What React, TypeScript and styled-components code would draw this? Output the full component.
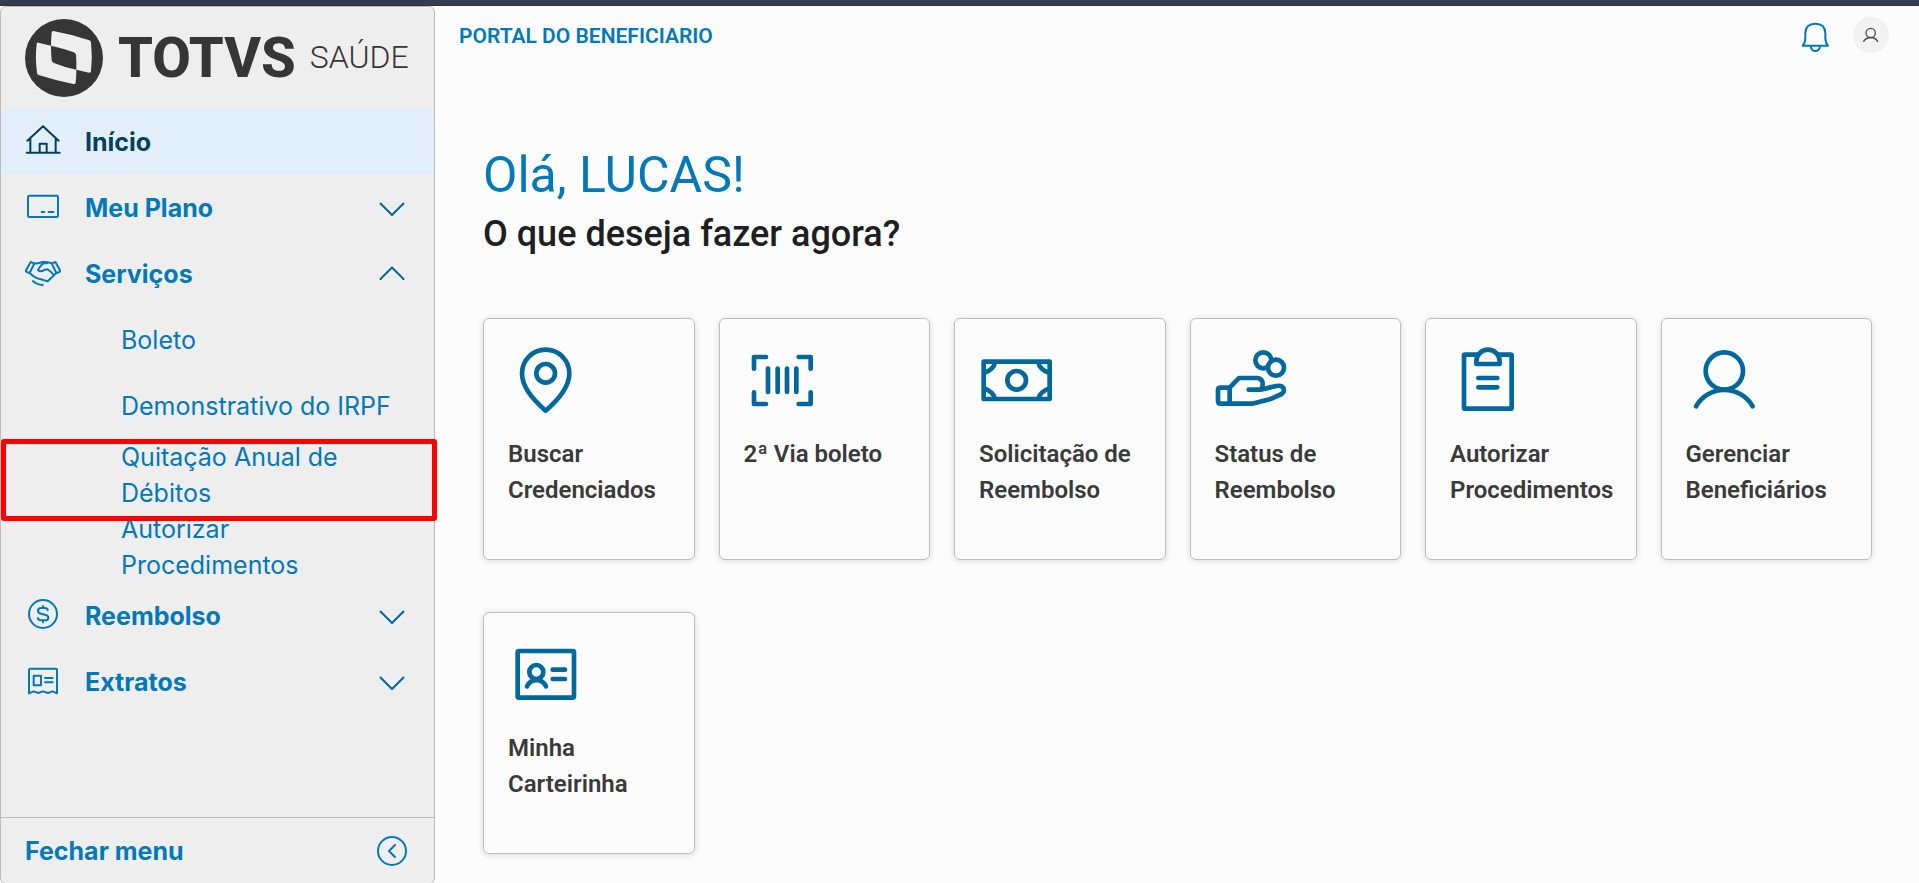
import React from "react";
import styled, { createGlobalStyle, css } from "styled-components";

const color = {
  brand: "#0079b8",
  brandDark: "#00689d",
  brandDeep: "#00405f",
  selected: "#e2eefa",
  panel: "#eeeeee",
  page: "#fcfcfc",
  line: "#bbbdbf",
  title: "#1d2022",
  text: "#3a3a3a",
  logo: "#363636",
  mark: "#ff0000",
};

const menuFont = `Inter, "Open Sans", sans-serif`;

const GlobalStyle = createGlobalStyle`
  *, *::before, *::after { box-sizing: border-box; }
  body {
    margin: 0;
    background: ${color.page};
    font-family: Roboto, "Liberation Sans", sans-serif;
    color: ${color.text};
  }
  h1, h2, ul { margin: 0; padding: 0; }
  ul { list-style: none; }
  a { color: inherit; text-decoration: none; }
  button { border: 0; padding: 0; background: none; color: inherit; font: inherit; cursor: pointer; }
`;

const Page = styled.div`
  display: flex;
  flex-direction: column;
  min-height: 100vh;
`;

const TopStrip = styled.div`
  height: 6px;
  background: #333c50;
  border-bottom: 1px solid #2b3142;
`;

const Body = styled.div`
  flex: 1;
  display: flex;
`;

/* Side menu */

const Sidebar = styled.aside`
  flex: none;
  width: 435px;
  display: flex;
  flex-direction: column;
  background: ${color.panel};
  border: 1px solid ${color.line};
  border-radius: 6px;
  color: ${color.brand};
  font-family: ${menuFont};
  font-size: 25px;
  line-height: 36px;
`;

const Brand = styled.a`
  display: flex;
  align-items: center;
  height: 102px;
  padding-left: 24px;
  color: ${color.logo};
  font-family: Roboto, sans-serif;
`;

const BrandName = styled.span`
  margin-left: 15px;
  font-size: 56px;
  font-weight: 800;
  line-height: 60px;
`;

const BrandUnit = styled.span`
  margin-left: 14px;
  padding-bottom: 2px;
  font-size: 32px;
  font-weight: 300;
  line-height: 60px;
`;

const Nav = styled.nav`
  flex: 1;
`;

const rowLayout = css`
  display: flex;
  align-items: center;
  width: 100%;
  height: 66px;
  padding: 0 27px 0 24px;
  text-align: left;
  font-weight: 700;
`;

const MenuLink = styled.a<{ $active?: boolean }>`
  ${rowLayout}
  gap: 24px;
  border-radius: 6px;
  ${(p) => p.$active && css`
    && { color: ${color.brandDeep}; }
    background: ${color.selected};
  `}
`;

const MenuButton = styled.button`
  && {
    ${rowLayout}
    gap: 24px;
  }
`;

const MenuLabel = styled.span`
  flex: 1;
`;

const SubItem = styled.li<{ $marked?: boolean }>`
  position: relative;
  ${(p) => p.$marked && css`
    &::after {
      content: "";
      position: absolute;
      z-index: 1;
      inset: 0 -3px -10px 0;
      border: 5px solid ${color.mark};
      border-radius: 3px;
      pointer-events: none;
    }
  `}
`;

const SubLink = styled.a`
  display: flex;
  align-items: center;
  min-height: 66px;
  padding: 0 27px 0 120px;
  font-weight: 400;
`;

const CloseButton = styled.button`
  && {
    ${rowLayout}
    justify-content: space-between;
    border-top: 1px solid ${color.line};
  }
`;

/* Main area */

const Main = styled.div`
  flex: 1;
  min-width: 0;
`;

const Header = styled.header`
  display: flex;
  align-items: center;
  height: 58px;
  padding: 0 30px 0 24px;
`;

const PortalName = styled.div`
  flex: 1;
  padding-top: 2px;
  color: ${color.brand};
  font-size: 21px;
  font-weight: 600;
  line-height: 28px;
`;

const HeaderActions = styled.div`
  display: flex;
  align-items: center;
  gap: 20px;
`;

const IconButton = styled.button`
  && {
    display: flex;
    color: ${color.brand};
  }
`;

const Avatar = styled.button`
  && {
    display: flex;
    border-radius: 50%;
    background: radial-gradient(#f6f6f6, #eeeeee);
    color: #4a4a4a;
  }
`;

const Content = styled.main`
  padding: 78px 47px 30px 48px;
`;

const Greeting = styled.h1`
  color: ${color.brand};
  font-size: 50px;
  font-weight: 400;
  line-height: 66px;
`;

const Question = styled.h2`
  margin-bottom: 58px;
  color: ${color.title};
  font-size: 36px;
  font-weight: 500;
  line-height: 52px;
`;

const Cards = styled.ul`
  display: grid;
  grid-template-columns: repeat(6, minmax(0, 1fr));
  column-gap: 24px;
  row-gap: 52px;
`;

const Card = styled.a`
  display: flex;
  flex-direction: column;
  align-items: flex-start;
  gap: 17px;
  min-height: 242px;
  padding: 24px 0 24px 24px;
  border: 1px solid ${color.line};
  border-radius: 6px;
  box-shadow: 0 1px 6px rgba(0, 0, 0, 0.14);
  font-size: 24px;
  font-weight: 600;
  line-height: 36px;
`;

const CardTitle = styled.span`
  max-width: 168px;
`;

/* Drawings */

const Glyph = styled.svg<{ $tone?: string }>`
  flex: none;
  display: block;
  fill: none;
  stroke: ${(p) => p.$tone || "currentColor"};
  stroke-linecap: round;
  stroke-linejoin: round;
`;

const MenuGlyph = ({ children }: { children: React.ReactNode }) => (
  <Glyph width="36" height="36" viewBox="0 0 108 108" strokeWidth="6" aria-hidden="true">
    {children}
  </Glyph>
);

const CardGlyph = ({ children }: { children: React.ReactNode }) => (
  <Glyph width="76" height="76" viewBox="-2 -2 228 228" strokeWidth="14" $tone={color.brandDark} aria-hidden="true">
    {children}
  </Glyph>
);

const Chevron = ({ open }: { open?: boolean }) => (
  <Glyph width="30" height="30" viewBox="0 0 30 30" strokeWidth="2" $tone={color.brandDark} aria-hidden="true">
    <path d={open ? "M3.5 20 15 8.5 26.5 20" : "M3.5 10.5 15 22 26.5 10.5"} />
  </Glyph>
);

const LogoMark = () => (
  <svg width="78" height="78" viewBox="75 57 234 234" aria-hidden="true">
    <circle cx="192" cy="174" r="117" fill={color.logo} />
    <g fill={color.panel}>
      <path d="M160 93Q215 103 268 121Q272 122 273 127Q278 170 273 214Q272 219 267 218L229 209Q230 186 228 165Q227 159 221 157Q190 145 153 137Q153 118 155 98Q156 92 160 93Z" />
      <path d="M115 128L153 137Q153 160 155 181Q156 187 162 189Q193 202 229 209Q229 230 227 248Q226 253 220 252Q165 241 116 225Q111 223 111 218Q105 174 110 132Q111 127 115 128Z" />
    </g>
  </svg>
);

const menuIcons = {
  home: (
    <MenuGlyph>
      <path d="M7 50 54 7l47 43M16 43v43M92 43v43M5 86h99M44 86V59h21v27" />
    </MenuGlyph>
  ),
  card: (
    <MenuGlyph>
      <rect x="9" y="17" width="90" height="64" rx="4" />
      <path d="M50 66h8M71 66h14" />
    </MenuGlyph>
  ),
  handshake: (
    <MenuGlyph>
      <path d="M17 18 3 43Q2 46 5 48L14 51 28 22ZM91 18l14 25Q106 46 103 48L94 51 80 22Z" />
      <path d="M28 23Q42 21 54 18Q66 17 80 22M66 22H56Q49 25 39 42Q47 50 60 41L68 40Q79 47 87 58M14 51Q30 67 45 69L68 76 94 51M24 75Q36 86 53 87" />
    </MenuGlyph>
  ),
  money: (
    <MenuGlyph>
      <circle cx="54" cy="48" r="42" />
      <path d="M68 37Q68 30 59 30H49Q39 30 39 38Q39 45 48 47L60 50Q70 52 70 59Q70 67 60 67H49Q39 67 39 60M54 24v6M54 67v6" />
    </MenuGlyph>
  ),
  receipt: (
    <MenuGlyph>
      <path d="M12 88V18Q12 14 16 14H92Q96 14 96 18V88L83 82 69 87 54 82 40 87 26 82Z" />
      <path d="M26 35h22v29H26ZM60 42h23M60 55h23" />
    </MenuGlyph>
  ),
};

const cardIcons = {
  pin: (
    <CardGlyph>
      <path d="M40 89a71 71 0 0 1 142 0C182 130 150 168 111 201 72 168 40 130 40 89Z" />
      <circle cx="111" cy="89" r="28" />
    </CardGlyph>
  ),
  barcode: (
    <CardGlyph>
      <path d="M28 75V40H64M162 40H198V75M198 146V181H162M64 181H28V146M70 75V145M99 75V145M127 75V145M155 75V145" />
    </CardGlyph>
  ),
  banknote: (
    <CardGlyph>
      <rect x="12" y="54" width="198" height="112" />
      <circle cx="111" cy="110" r="28" />
      <path d="M46 56Q42 78 14 87M176 56Q180 78 208 87M46 164Q40 144 14 134M176 164Q182 144 208 134" />
    </CardGlyph>
  ),
  coins: (
    <CardGlyph>
      <circle cx="143" cy="50" r="24" />
      <circle cx="181" cy="72" r="24" fill={color.page} />
      <path d="M42 132H14Q7 132 7 139V173Q7 180 14 180H109L162 167 198 151Q208 144 203 133Q198 124 182 127L134 138M42 132V180M42 132 70 103H126Q141 106 141 121Q141 138 132 138H99" />
    </CardGlyph>
  ),
  clipboard: (
    <CardGlyph>
      <rect x="40" y="33" width="143" height="162" rx="3" />
      <path d="M77 61V54a35 36 0 0 1 70 0V61Z" fill={color.page} />
      <path d="M83 103h57M83 131h57" />
    </CardGlyph>
  ),
  user: (
    <CardGlyph>
      <circle cx="113" cy="82" r="56" />
      <path d="M28 188A98 98 0 0 1 198 188" />
    </CardGlyph>
  ),
  badge: (
    <CardGlyph>
      <rect x="27" y="40" width="169" height="140" rx="4" />
      <circle cx="83" cy="103" r="21" />
      <path d="M55 146A31 31 0 0 1 112 146M132 96h37M132 124h37" />
    </CardGlyph>
  ),
};

/* Data */

type MenuEntry = {
  label: string;
  icon: keyof typeof menuIcons;
  active?: boolean;
  group?: boolean;
  items?: { label: string; marked?: boolean }[];
};

const menu: MenuEntry[] = [
  { label: "Início", icon: "home", active: true },
  { label: "Meu Plano", icon: "card", group: true },
  {
    label: "Serviços",
    icon: "handshake",
    group: true,
    items: [
      { label: "Boleto" },
      { label: "Demonstrativo do IRPF" },
      { label: "Quitação Anual de Débitos", marked: true },
      { label: "Autorizar Procedimentos" },
    ],
  },
  { label: "Reembolso", icon: "money", group: true },
  { label: "Extratos", icon: "receipt", group: true },
];

const shortcuts: { label: string; icon: keyof typeof cardIcons }[] = [
  { label: "Buscar Credenciados", icon: "pin" },
  { label: "2ª Via boleto", icon: "barcode" },
  { label: "Solicitação de Reembolso", icon: "banknote" },
  { label: "Status de Reembolso", icon: "coins" },
  { label: "Autorizar Procedimentos", icon: "clipboard" },
  { label: "Gerenciar Beneficiários", icon: "user" },
  { label: "Minha Carteirinha", icon: "badge" },
];

export default function App() {
  return (
    <Page>
      <GlobalStyle />
      <TopStrip />
      <Body>
        <Sidebar>
          <Brand href="#">
            <LogoMark />
            <BrandName>TOTVS</BrandName>
            <BrandUnit>SAÚDE</BrandUnit>
          </Brand>
          <Nav>
            <ul>
              {menu.map((entry) => (
                <li key={entry.label}>
                  {entry.group ? (
                    <MenuButton type="button" aria-expanded={!!entry.items}>
                      {menuIcons[entry.icon]}
                      <MenuLabel>{entry.label}</MenuLabel>
                      <Chevron open={!!entry.items} />
                    </MenuButton>
                  ) : (
                    <MenuLink href="#" $active={entry.active}>
                      {menuIcons[entry.icon]}
                      <MenuLabel>{entry.label}</MenuLabel>
                    </MenuLink>
                  )}
                  {entry.items && (
                    <ul>
                      {entry.items.map((item) => (
                        <SubItem key={item.label} $marked={item.marked}>
                          <SubLink href="#">{item.label}</SubLink>
                        </SubItem>
                      ))}
                    </ul>
                  )}
                </li>
              ))}
            </ul>
          </Nav>
          <CloseButton type="button">
            Fechar menu
            <Glyph width="30" height="30" viewBox="0 0 30 30" strokeWidth="2" aria-hidden="true">
              <circle cx="15" cy="15" r="14" />
              <path d="M18 9 12 15l6 6" />
            </Glyph>
          </CloseButton>
        </Sidebar>
        <Main>
          <Header>
            <PortalName>PORTAL DO BENEFICIARIO</PortalName>
            <HeaderActions>
              <IconButton type="button" aria-label="Notificações">
                <Glyph width="36" height="36" viewBox="0 0 108 108" strokeWidth="6" aria-hidden="true">
                  <path d="M17 86Q25 78 25 62V48Q26 20 55 20Q84 20 85 48V62Q85 78 93 86ZM41 89Q44 102 55 102Q66 102 69 89" />
                </Glyph>
              </IconButton>
              <Avatar type="button" aria-label="Perfil">
                <Glyph width="36" height="36" viewBox="0 0 108 108" strokeWidth="4" aria-hidden="true">
                  <circle cx="53" cy="48" r="14" />
                  <path d="M32 73A25 25 0 0 1 74 73" />
                </Glyph>
              </Avatar>
            </HeaderActions>
          </Header>
          <Content>
            <Greeting>Olá, LUCAS!</Greeting>
            <Question>O que deseja fazer agora?</Question>
            <Cards>
              {shortcuts.map((item) => (
                <li key={item.label}>
                  <Card href="#">
                    {cardIcons[item.icon]}
                    <CardTitle>{item.label}</CardTitle>
                  </Card>
                </li>
              ))}
            </Cards>
          </Content>
        </Main>
      </Body>
    </Page>
  );
}
